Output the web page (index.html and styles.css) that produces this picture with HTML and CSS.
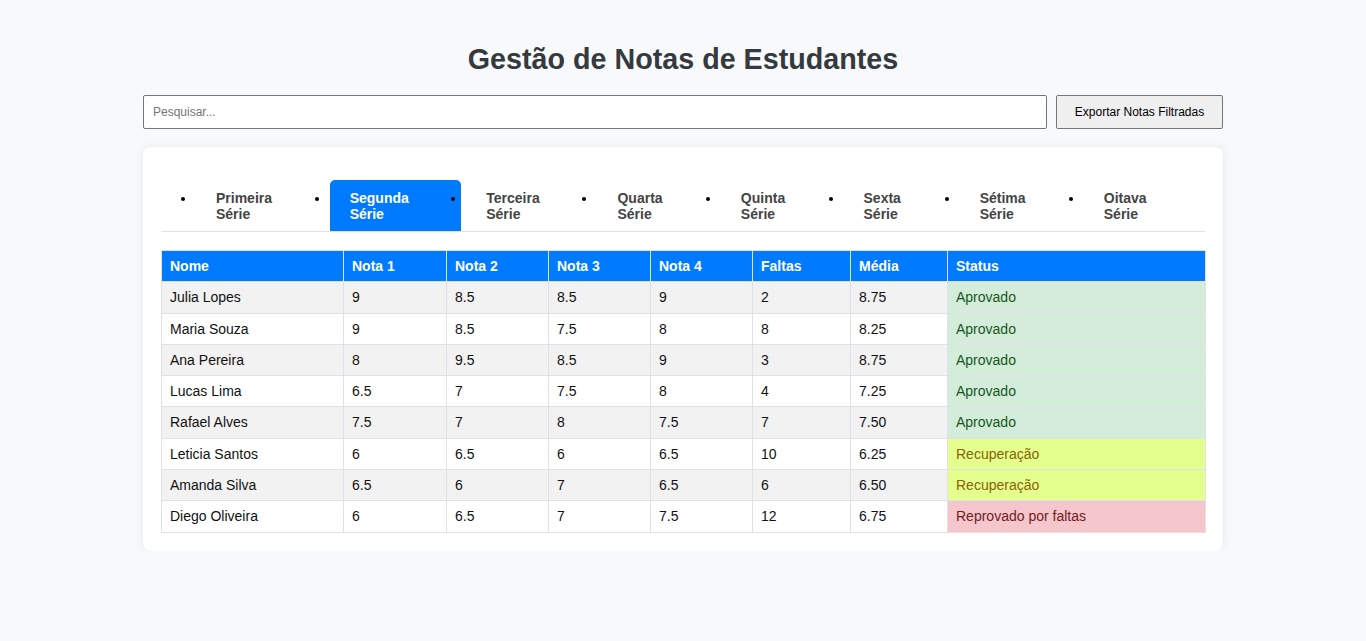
FILE: index.html
```html
<!DOCTYPE html>
<html lang="pt">
<head>
<meta charset="utf-8">
<title>Gestão de Notas de Estudantes</title>
<link rel="stylesheet" href="styles.css">
</head>
<body>
<div class="container">
  <h1 class="title">Gestão de Notas de Estudantes</h1>
  <div class="toolbar">
    <input class="search" type="text" placeholder="Pesquisar...">
    <button class="export">Exportar Notas Filtradas</button>
  </div>
  <div class="card">
    <ul class="tabs">
      <li class="tab">Primeira Série</li>
      <li class="tab active">Segunda Série</li>
      <li class="tab">Terceira Série</li>
      <li class="tab">Quarta Série</li>
      <li class="tab">Quinta Série</li>
      <li class="tab">Sexta Série</li>
      <li class="tab">Sétima Série</li>
      <li class="tab">Oitava Série</li>
    </ul>
    <table class="grades">
      <colgroup>
        <col class="c-nome"><col class="c-nota"><col class="c-nota2"><col class="c-nota2"><col class="c-nota2"><col class="c-faltas"><col class="c-media"><col class="c-status">
      </colgroup>
      <thead>
        <tr><th>Nome</th><th>Nota 1</th><th>Nota 2</th><th>Nota 3</th><th>Nota 4</th><th>Faltas</th><th>Média</th><th>Status</th></tr>
      </thead>
      <tbody>
        <tr><td>Julia Lopes</td><td>9</td><td>8.5</td><td>8.5</td><td>9</td><td>2</td><td>8.75</td><td class="st ok">Aprovado</td></tr>
        <tr><td>Maria Souza</td><td>9</td><td>8.5</td><td>7.5</td><td>8</td><td>8</td><td>8.25</td><td class="st ok">Aprovado</td></tr>
        <tr><td>Ana Pereira</td><td>8</td><td>9.5</td><td>8.5</td><td>9</td><td>3</td><td>8.75</td><td class="st ok">Aprovado</td></tr>
        <tr><td>Lucas Lima</td><td>6.5</td><td>7</td><td>7.5</td><td>8</td><td>4</td><td>7.25</td><td class="st ok">Aprovado</td></tr>
        <tr><td>Rafael Alves</td><td>7.5</td><td>7</td><td>8</td><td>7.5</td><td>7</td><td>7.50</td><td class="st ok">Aprovado</td></tr>
        <tr><td>Leticia Santos</td><td>6</td><td>6.5</td><td>6</td><td>6.5</td><td>10</td><td>6.25</td><td class="st rec">Recuperação</td></tr>
        <tr><td>Amanda Silva</td><td>6.5</td><td>6</td><td>7</td><td>6.5</td><td>6</td><td>6.50</td><td class="st rec">Recuperação</td></tr>
        <tr><td>Diego Oliveira</td><td>6</td><td>6.5</td><td>7</td><td>7.5</td><td>12</td><td>6.75</td><td class="st rep">Reprovado por faltas</td></tr>
      </tbody>
    </table>
  </div>
</div>
</body>
</html>
```
FILE: styles.css
```css
html, body {
  margin: 0;
  padding: 0;
}
body {
  background: #f8f9fa;
  font-family: "Liberation Sans", Arial, sans-serif;
  color: #212529;
}
.container {
  width: 1080px;
  margin: 0 auto;
  padding-top: 43px;
}
.title {
  margin: 0 0 20px;
  text-align: center;
  font-size: 28.7px;
  line-height: 32px;
  font-weight: bold;
  color: #343a40;
}
.toolbar {
  display: flex;
  gap: 9px;
  margin-bottom: 18px;
}
.search {
  flex: 1;
  height: 34px;
  box-sizing: border-box;
  border: 1px solid #767676;
  border-radius: 2px;
  padding: 0 9px;
  font-family: "Liberation Sans", Arial, sans-serif;
  font-size: 12px;
  background: #fff;
  color: #212529;
}
.search::placeholder {
  color: #757575;
}
.export {
  width: 167px;
  height: 34px;
  box-sizing: border-box;
  border: 1px solid #767676;
  border-radius: 2px;
  background: #efefef;
  font-family: "Liberation Sans", Arial, sans-serif;
  font-size: 12px;
  color: #000;
  padding: 0;
}
.card {
  background: #fff;
  border-radius: 8px;
  box-shadow: 0 0 10px rgba(0, 0, 0, 0.08);
  padding: 18px;
}
.tabs {
  display: flex;
  margin: 15px 0 18px;
  padding: 0 0 0 35px;
  border-bottom: 1px solid #dee2e6;
  list-style: disc;
}
.tab {
  padding: 11px 20px 9px;
  margin-right: 5.2px;
  font-size: 14px;
  line-height: 15.5px;
  font-weight: bold;
  color: #444;
  border-radius: 5px 5px 0 0;
}
.tab::marker {
  color: #000;
}
.tab.active {
  background: #007bff;
  color: #fff;
}
.grades {
  width: 100%;
  border-collapse: collapse;
  table-layout: fixed;
  font-size: 14px;
}
.c-nome { width: 182px; }
.c-nota { width: 103px; }
.c-nota2 { width: 102px; }
.c-faltas { width: 98px; }
.c-media { width: 97px; }
.c-status { width: 258px; }
.grades th,
.grades td {
  border: 1px solid #dee2e6;
  padding: 7px 8px;
  line-height: 16.3px;
  text-align: left;
}
.grades th {
  background: #007bff;
  color: #fff;
  font-weight: bold;
}
.grades td {
  color: #111;
}
.grades tbody tr:nth-child(odd) td {
  background: #f2f2f2;
}
.grades tbody td.st.ok {
  background: #d4edda;
  color: #155724;
}
.grades tbody td.st.rec {
  background: #e5ff8f;
  color: #856404;
}
.grades tbody td.st.rep {
  background: #f5c6cb;
  color: #721c24;
}
```
